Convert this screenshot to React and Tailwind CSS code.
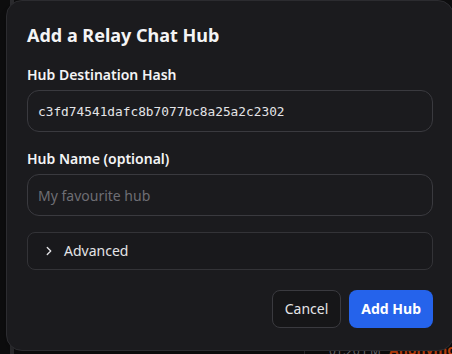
import { ChevronRight } from 'lucide-react'

const App = () => {
  return (
    <div
      className="relative h-[354px] w-[452px] overflow-hidden bg-[#0d0d0e] text-white"
      style={{ fontFamily: '"Noto Sans", sans-serif' }}
    >
      {/* page behind the dialog */}
      <div className="flex h-full">
        <div className="w-[10px] shrink-0" />
        <div className="w-[4px] shrink-0 bg-[#2a2a2d]" />
        <div className="w-[291px] shrink-0 border-r border-[#2a2a2d]" />
        <div className="flex min-w-0 flex-1 flex-col justify-end">
          <div className="flex translate-y-[3px] items-baseline gap-2 whitespace-nowrap pl-[24px] leading-none">
            <span className="text-[12px] text-[#6b6b70]">01:26 PM</span>
            <span className="text-[14px] font-bold text-[#c2410c]">Anonymous</span>
          </div>
        </div>
      </div>

      {/* dialog */}
      <div className="absolute left-[6px] top-0 w-[448px] rounded-2xl border border-[#2c2c30] bg-[#1b1b1e] p-5 pb-[22px] shadow-lg">
        <h2 className="mb-4 text-lg font-bold leading-7 text-[#f4f4f5]">Add a Relay Chat Hub</h2>

        <label className="mb-[5px] block text-sm font-semibold text-[#f4f4f5]">Hub Destination Hash</label>
        <input
          readOnly
          value="c3fd74541dafc8b7077bc8a25a2c2302"
          className="mb-[17px] block h-[42px] w-full rounded-xl border border-[#3a3a3f] bg-[#1b1b1e] px-2.5 text-[12.8px] text-[#e4e4e7] outline-none"
          style={{ fontFamily: '"DejaVu Sans Mono", monospace' }}
        />

        <label className="mb-[5px] block text-sm font-semibold text-[#f4f4f5]">Hub Name (optional)</label>
        <input
          placeholder="My favourite hub"
          className="mb-4 block h-[42px] w-full rounded-xl border border-[#3a3a3f] bg-[#1b1b1e] px-2.5 text-sm text-[#e4e4e7] outline-none placeholder:text-[#6e6e74]"
        />

        <div className="flex h-[38px] items-center gap-2 rounded-lg border border-[#333337] bg-[#19191c] pl-[14px] text-sm text-[#e4e4e7]">
          <ChevronRight size={14} strokeWidth={2.25} />
          <span>Advanced</span>
        </div>

        <div className="mt-5 flex justify-end gap-2">
          <button className="h-[38px] rounded-lg border border-[#3a3a3f] bg-[#161618] px-3 text-sm text-[#e4e4e7]">
            Cancel
          </button>
          <button className="h-[38px] rounded-lg bg-[#2563eb] px-3 text-sm font-bold text-white">
            Add Hub
          </button>
        </div>
      </div>
    </div>
  )
}

export default App
